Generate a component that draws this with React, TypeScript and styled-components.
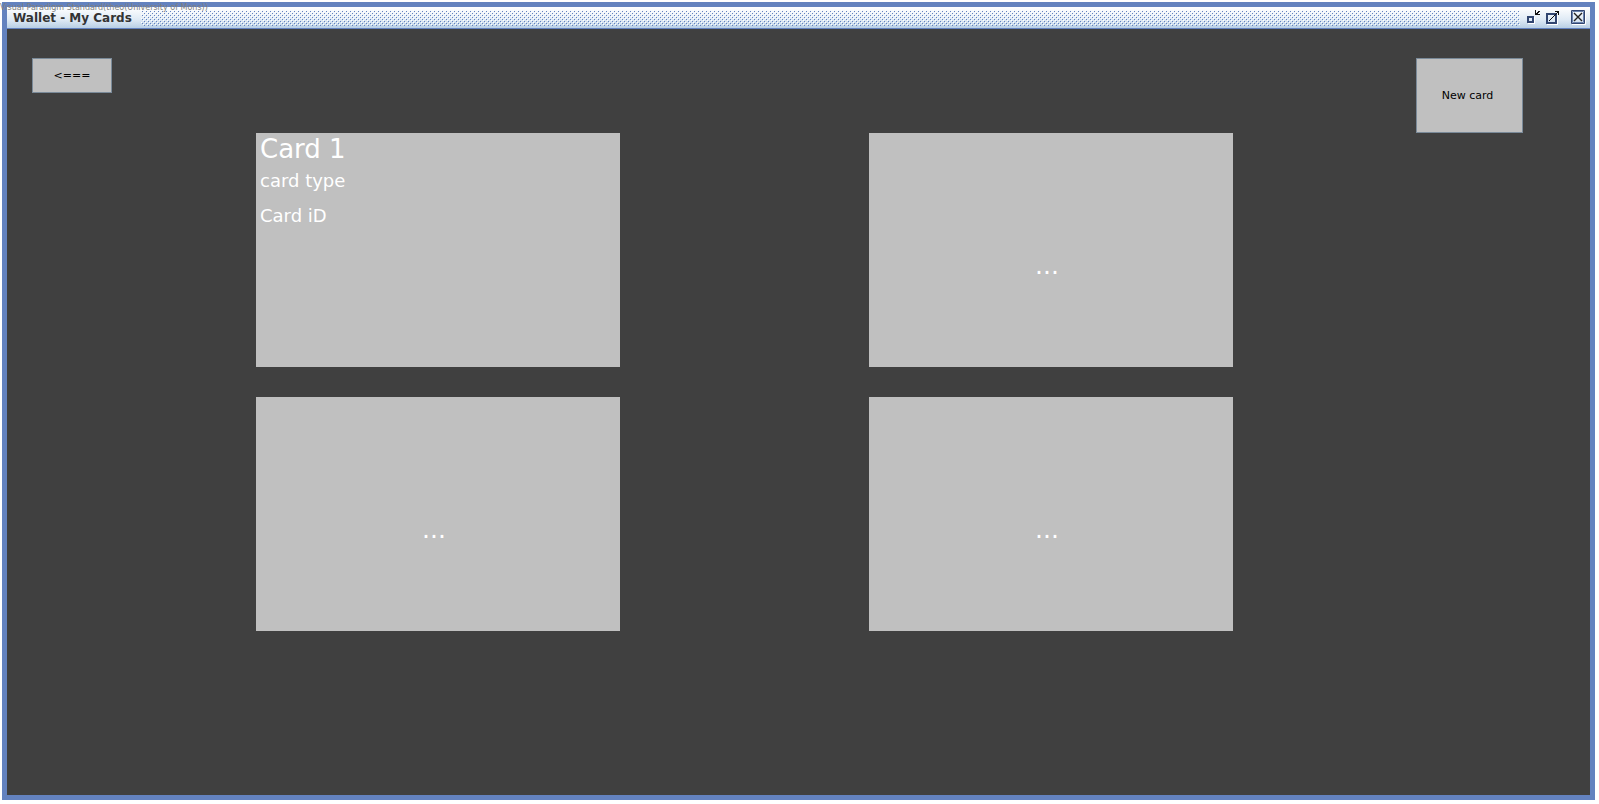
import React from "react";
import styled, { createGlobalStyle } from "styled-components";

const GlobalStyle = createGlobalStyle`
  *, *::before, *::after { box-sizing: border-box; }
  body {
    margin: 0;
    background: #fff;
    font-family: "DejaVu Sans", sans-serif;
  }
  p, h1, h2 { margin: 0; font-weight: normal; }
`;

const Page = styled.div`
  display: flex;
  min-height: 100vh;
  padding: 2px 4px 4px 2px;
`;

const Watermark = styled.div`
  position: absolute;
  top: 2px;
  left: 0;
  color: #808080;
  font-size: 8px;
  line-height: 12px;
  white-space: nowrap;
`;

const Frame = styled.main`
  display: flex;
  flex: 1;
  flex-direction: column;
  border: 5px solid #6382bf;
`;

const TitleBar = styled.header`
  display: flex;
  align-items: center;
  gap: 5px;
  height: 22px;
  padding: 1px 4px 0 6px;
  border-bottom: 1px solid #6382bf;
  background: linear-gradient(#ffffff, #dfeaf5 60%, #b8cfe5);
`;

const Title = styled.h1`
  padding-right: 4px;
  color: #333;
  font-size: 12px;
  font-weight: bold;
  line-height: 20px;
`;

const Bumps = styled.svg`
  flex: 1;
  height: 16px;
  min-width: 0;
`;

const WindowControls = styled.div`
  display: flex;
  gap: 4px;
`;

const WindowButton = styled.button<{ $spaced?: boolean }>`
  width: 16px;
  height: 16px;
  margin-left: ${(p) => (p.$spaced ? 5 : 0)}px;
  padding: 0;
  border: 0;
  background: none;

  svg { display: block; }
`;

const Body = styled.div`
  flex: 1;
  padding: 29px 0;
  background: #404040;
`;

const Toolbar = styled.nav`
  display: flex;
  align-items: flex-start;
  justify-content: space-between;
  padding: 0 67px 0 25px;
`;

const Button = styled.button<{ $width: number; $height: number }>`
  width: ${(p) => p.$width}px;
  height: ${(p) => p.$height}px;
  padding: 0;
  border: 1px solid #7a8a99;
  background: #c0c0c0;
  color: #000;
  font-family: inherit;
  font-size: 11px;
`;

const NewCardButton = styled(Button)`
  padding-right: 4px;
`;

const CardGrid = styled.section`
  display: grid;
  grid-template-columns: 1fr 1fr;
  gap: 30px 249px;
  padding: 0 357px 0 249px;
`;

const Card = styled.article`
  min-height: 234px;
  padding: 0 4px;
  background: #c0c0c0;
  color: #fff;
`;

const CardName = styled.h2`
  font-size: 26px;
  line-height: 32px;
`;

const CardDetail = styled.p`
  padding-bottom: 4px;
  font-size: 18px;
  line-height: 31px;
`;

const Placeholder = styled.p`
  padding: 117px 8px 0 0;
  font-size: 25px;
  line-height: 32px;
  text-align: center;
`;

export default function App() {
  return (
    <>
      <GlobalStyle />
      <Page>
        <Frame>
          <TitleBar>
            <Title>Wallet - My Cards</Title>
            <Bumps aria-hidden="true" shapeRendering="crispEdges">
              <defs>
                <pattern id="bumps" width="4" height="4" patternUnits="userSpaceOnUse">
                  <path d="M0 0h1v1h-1zM2 2h1v1h-1z" fill="#fff" />
                  <path d="M1 1h1v1h-1zM3 3h1v1h-1z" fill="#6382bf" />
                </pattern>
              </defs>
              <rect width="100%" height="16" fill="url(#bumps)" />
            </Bumps>
            <WindowControls>
              <WindowButton aria-label="Minimize">
                <svg width="16" height="16" shapeRendering="crispEdges" fill="none">
                  <path d="M3 13.5h7M9.5 7v7" stroke="#fff" />
                  <path d="M3 7h5v5h-5z" stroke="#314570" strokeWidth="2" />
                  <path d="M10.5 0v5M10 4.5h5M11 3.5h2M12 2.5h2M13 1.5h2" stroke="#111" />
                </svg>
              </WindowButton>
              <WindowButton aria-label="Maximize">
                <svg width="16" height="16" shapeRendering="crispEdges" fill="none">
                  <path d="M2 14.5h11M12.5 5v10" stroke="#fff" />
                  <path d="M2 4h9v9h-9z" stroke="#314570" strokeWidth="2" />
                  <path d="M10 1.5h4M13.5 1v4" stroke="#111" />
                  <path d="M4 11L13 2" stroke="#111" shapeRendering="auto" />
                </svg>
              </WindowButton>
              <WindowButton aria-label="Close" $spaced>
                <svg width="16" height="16" fill="none">
                  <path d="M2 14.5h13.5V1" stroke="#fff" />
                  <path d="M1.5 .5h13v13h-13z" stroke="#314570" />
                  <path d="M2.5 1.5h11v11h-11z" stroke="#6a82ad" />
                  <path d="M4 3l8 8M12 3l-8 8" stroke="#222" strokeWidth="1.4" />
                </svg>
              </WindowButton>
            </WindowControls>
          </TitleBar>
          <Body>
            <Toolbar>
              <Button $width={80} $height={35}>&lt;===</Button>
              <NewCardButton $width={107} $height={75}>New card</NewCardButton>
            </Toolbar>
            <CardGrid>
              <Card>
                <CardName>Card 1</CardName>
                <CardDetail>card type</CardDetail>
                <CardDetail>Card iD</CardDetail>
              </Card>
              <Card><Placeholder>...</Placeholder></Card>
              <Card><Placeholder>...</Placeholder></Card>
              <Card><Placeholder>...</Placeholder></Card>
            </CardGrid>
          </Body>
        </Frame>
        <Watermark>Visual Paradigm Standard(theo(University of Mons))</Watermark>
      </Page>
    </>
  );
}
